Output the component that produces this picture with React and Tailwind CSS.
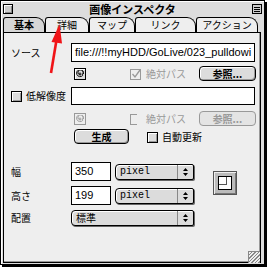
import React from 'react';

const jp = "font-['Noto_Sans_CJK_JP','Noto_Sans',sans-serif]";
const geneva = "font-['Liberation_Sans',Arial,sans-serif]";

function CheckBox({ checked = false, disabled = false }) {
  return (
    <span
      className={`relative inline-block h-[11px] w-[11px] border ${
        disabled ? 'border-[#999] bg-[#eee]' : 'border-black bg-[#ddd] shadow-[inset_1px_1px_0_#fff,inset_-1px_-1px_0_#999]'
      }`}
    >
      {checked && (
        <svg className="absolute left-[0px] top-[-1px]" width="10" height="10" viewBox="0 0 10 10">
          <path d="M1.5 5 L4 8 L9 1" fill="none" stroke={disabled ? '#999' : '#000'} strokeWidth="1.3" />
        </svg>
      )}
    </span>
  );
}

function AliasButton({ disabled = false }) {
  return (
    <span
      className={`flex h-[12px] w-[12px] items-center justify-center border ${
        disabled ? 'border-[#999] bg-[#eee]' : 'border-black bg-[#ddd] shadow-[inset_1px_1px_0_#fff]'
      }`}
    >
      <svg width="8" height="8" viewBox="0 0 8 8">
        <path
          d="M4 4.5 A0.8 0.8 0 1 1 4.8 3.7 L4.8 5 A2.6 2.6 0 1 1 6.6 4 L6.6 5.6 A3.5 3.5 0 1 1 7.5 4"
          fill="none"
          stroke={disabled ? '#999' : '#000'}
          strokeWidth="0.9"
        />
      </svg>
    </span>
  );
}

function PushButton({ label, width, disabled = false }) {
  return (
    <span
      className={`flex h-[15px] items-center justify-center rounded-[4px] border text-[10px] font-bold leading-none ${jp} ${
        disabled
          ? 'border-[#999] bg-[#e4e4e4] text-[#999]'
          : 'border-black bg-[#dcdcdc] text-black shadow-[inset_1px_1px_0_#fff,inset_-1px_-1px_0_#999]'
      }`}
      style={{ width }}
    >
      {label}
    </span>
  );
}

function Popup({ label, width, mono = false }) {
  return (
    <span
      className="flex h-[16px] items-stretch rounded-l-[4px] rounded-r-[2px] border border-black bg-[#dcdcdc] shadow-[1px_1px_0_#666,inset_1px_1px_0_#fff]"
      style={{ width }}
    >
      <span
        className={`flex flex-1 items-center pl-[4px] leading-none text-black ${
          mono ? "font-['Liberation_Mono',monospace] text-[10px]" : `${jp} text-[10px]`
        }`}
      >
        {label}
      </span>
      <span className="flex w-[16px] items-center justify-center border-l border-[#888]">
        <svg width="7" height="10" viewBox="0 0 7 10">
          <path d="M3.5 1 L6 4 L1 4 Z M3.5 9 L6 6 L1 6 Z" fill="#000" />
        </svg>
      </span>
    </span>
  );
}

function Field({ value, width, height = 19 }) {
  return (
    <span
      className={`flex items-center overflow-hidden whitespace-nowrap border border-black bg-white pl-[3px] text-[11px] leading-none text-black ${geneva}`}
      style={{ width, height }}
    >
      {value}
    </span>
  );
}

function Label({ children }) {
  return <span className={`w-[60px] text-[10px] leading-none text-black ${jp}`}>{children}</span>;
}

const tabs = [
  { label: '基本', w: 42, active: true },
  { label: '詳細', w: 44 },
  { label: 'マップ', w: 46 },
  { label: 'リンク', w: 61 },
  { label: 'アクション', w: 62 },
];

export default function App() {
  return (
    <div className="relative h-[270px] w-[269px] bg-white">
      <div className="flex h-[265px] w-[265px] flex-col border border-black bg-[#dddddd] shadow-[2px_2px_0_#000,inset_1px_1px_0_#fff]">
        {/* title bar */}
        <div className="flex h-[15px] items-center gap-[3px] px-[2px] pt-[1px]">
          <span className="h-[10px] w-[10px] shrink-0 border border-black bg-[#ccc] shadow-[inset_1px_1px_0_#fff,inset_-1px_-1px_0_#888]" />
          <span className="h-[9px] flex-1 bg-[radial-gradient(#a4a4a4_0.5px,transparent_0.7px)] bg-[length:2px_2px]" />
          <span className={`px-[3px] text-[11px] font-bold leading-none text-black ${jp}`}>画像インスペクタ</span>
          <span className="h-[9px] flex-1 bg-[radial-gradient(#a4a4a4_0.5px,transparent_0.7px)] bg-[length:2px_2px]" />
          <span className="flex h-[10px] w-[10px] shrink-0 flex-col justify-center gap-[1px] border border-black bg-[#ccc] px-[1px]">
            <span className="h-px bg-black" />
            <span className="h-px bg-black" />
            <span className="h-px bg-black" />
          </span>
        </div>

        {/* tabs */}
        <div className="flex h-[16px] items-end pl-[2px] pt-[1px]">
          {tabs.map((t) => (
            <span
              key={t.label}
              className={`flex h-[15px] items-center justify-center rounded-tl-[3px] rounded-tr-[9px] border-l border-r border-t border-black text-[10px] leading-none text-black ${jp} ${
                t.active ? 'bg-[#d6d6d6] font-bold' : 'bg-[#eeeeee]'
              }`}
              style={{ width: t.w }}
            >
              {t.label}
            </span>
          ))}
        </div>

        {/* panel */}
        <div className="ml-[2px] mr-[3px] mb-[1px] flex flex-1 flex-col border border-black bg-[#eeeeee] pl-[7px] pt-[10px] shadow-[inset_-1px_-1px_0_#999]">
          <div className="flex items-center">
            <Label>ソース</Label>
            <Field value="file:///!!myHDD/GoLive/023_pulldowi" width={184} />
          </div>

          <div className="mt-[4px] flex h-[15px] items-center">
            <span className="w-[63px]" />
            <AliasButton />
            <span className="ml-[44px]">
              <CheckBox checked disabled />
            </span>
            <span className={`ml-[5px] text-[10px] leading-none text-[#999] ${jp}`}>絶対パス</span>
            <span className="ml-[13px]">
              <PushButton label="参照..." width={57} />
            </span>
          </div>

          <div className="mt-[6px] flex items-center">
            <span className="flex w-[60px] items-center">
              <CheckBox />
              <span className={`ml-[4px] text-[10px] leading-none text-black ${jp}`}>低解像度</span>
            </span>
            <Field value="" width={184} height={18} />
          </div>

          <div className="mt-[6px] flex h-[15px] items-center">
            <span className="w-[63px]" />
            <AliasButton disabled />
            <span className="ml-[44px]">
              <span className="inline-block h-[11px] w-[7px] border-y border-l border-[#999]" />
            </span>
            <span className={`ml-[9px] text-[10px] leading-none text-[#999] ${jp}`}>絶対パス</span>
            <span className="ml-[13px]">
              <PushButton label="参照..." width={57} disabled />
            </span>
          </div>

          <div className="mt-[3px] flex h-[15px] items-center">
            <span className="w-[63px]" />
            <PushButton label="生成" width={55} />
            <span className="ml-[18px]">
              <CheckBox />
            </span>
            <span className={`ml-[4px] text-[10px] leading-none text-black ${jp}`}>自動更新</span>
          </div>

          <div className="mt-[18px] flex">
            <div className="flex flex-col gap-[5px]">
              <div className="flex items-center">
                <Label>幅</Label>
                <Field value="350" width={40} />
                <span className="ml-[4px]">
                  <Popup label="pixel" width={79} mono />
                </span>
              </div>
              <div className="flex items-center">
                <Label>高さ</Label>
                <Field value="199" width={40} />
                <span className="ml-[4px]">
                  <Popup label="pixel" width={79} mono />
                </span>
              </div>
              <div className="flex items-center">
                <Label>配置</Label>
                <Popup label="標準" width={123} />
              </div>
            </div>
            <span className="ml-[19px] mt-[9px] flex h-[24px] w-[24px] items-center justify-center border border-[#555] bg-[#bbb] shadow-[inset_1px_1px_0_#eee,inset_-1px_-1px_0_#777]">
              <span className="relative h-[14px] w-[14px] border border-black bg-white">
                <span className="absolute left-0 top-0 h-[8px] w-[8px] border-b border-r border-[#555]" />
              </span>
            </span>
          </div>

          <div className="flex flex-1 items-end justify-end">
            <span className="mb-[-1px] h-[12px] w-[12px] border-l border-t border-[#888] bg-[repeating-linear-gradient(135deg,#eee_0px,#eee_1.5px,#888_1.5px,#888_2.5px)]" />
          </div>
        </div>
      </div>

      <svg className="pointer-events-none absolute left-0 top-0" width="269" height="270" viewBox="0 0 269 270">
        <line x1="51" y1="73" x2="56.5" y2="40" stroke="#f01418" strokeWidth="2.6" />
        <polygon points="59.5,24 51.5,42 62,43.5" fill="#f01418" />
      </svg>
    </div>
  );
}
